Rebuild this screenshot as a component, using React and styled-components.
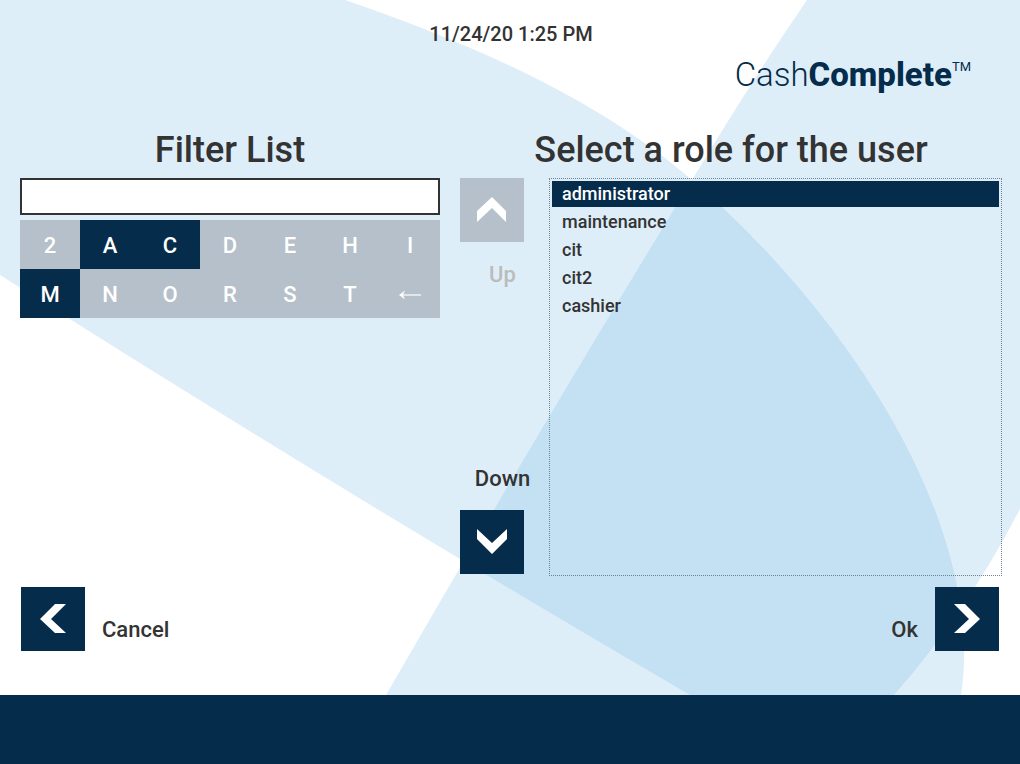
import React, { useState } from 'react';
import styled, { createGlobalStyle } from 'styled-components';

const NAVY = '#052c4b';
const GREY = '#b6c0ca';
const TEXT = '#333333';
const LIGHT = '#deeef9';
const MID = '#c4e1f3';

const ROLES = ['administrator', 'maintenance', 'cit', 'cit2', 'cashier'];
const KEYS = ['2', 'A', 'C', 'D', 'E', 'H', 'I', 'M', 'N', 'O', 'R', 'S', 'T'];

const CHEVRONS = {
  up: '32,19 46,33 46,44 32,30 17,44 17,33',
  down: '17,19 32,33 47,19 47,29 32,44 17,29',
  left: '19,32 34,17 45,17 30,32 45,46 34,46',
  right: '19,17 30,17 45,32 30,46 19,46 34,32',
};

const LENS = 'M0 0H345C455 38 590 92 692 180C820 290 955 470 964 640Q965 670 961 695H690Q340 491 0 275Z';
const BAND = 'M807 0Q752 80 692 180Q540 428 386 695H894Q965 615 1020 509V0Z';

const startsWith = (role, text) => role.toUpperCase().startsWith(text.toUpperCase());

const Chevron = ({ direction, disabled }) => (
  <Square $disabled={disabled} viewBox="0 0 64 64" aria-hidden="true">
    <polygon points={CHEVRONS[direction]} fill="#fff" />
  </Square>
);

const Background = () => (
  <Backdrop viewBox="0 0 1020 695" preserveAspectRatio="none" aria-hidden="true">
    <clipPath id="lens">
      <path d={LENS} />
    </clipPath>
    <path d={LENS} fill={LIGHT} />
    <path d={BAND} fill={LIGHT} />
    <path d={BAND} fill={MID} clipPath="url(#lens)" />
  </Backdrop>
);

const App = () => {
  const [filter, setFilter] = useState('');
  const [selected, setSelected] = useState(0);

  const roles = ROLES.filter(role => startsWith(role, filter));
  const isEnabled = key => roles.some(role => startsWith(role, filter + key));

  const changeFilter = value => {
    setFilter(value);
    setSelected(0);
  };

  return (
    <Page>
      <GlobalStyle />
      <Main>
        <Background />
        <Header>
          <Clock>11/24/20 1:25 PM</Clock>
          <Logo>
            Cash<strong>Complete</strong><sup>TM</sup>
          </Logo>
        </Header>
        <Content>
          <Section>
            <Title as="label" htmlFor="filter">Filter List</Title>
            <FilterInput
              id="filter"
              type="text"
              autoComplete="off"
              value={filter}
              onChange={e => changeFilter(e.target.value)}
            />
            <Keyboard>
              {KEYS.map(key => (
                <Key key={key} disabled={!isEnabled(key)} onClick={() => changeFilter(filter + key)}>
                  {key}
                </Key>
              ))}
              <Key aria-label="Backspace" disabled={!filter} onClick={() => changeFilter(filter.slice(0, -1))}>
                <svg width="22" height="12" viewBox="0 0 22 12" aria-hidden="true">
                  <path d="M1 6H22" stroke="#fff" strokeWidth="1.2" />
                  <path d="M0 6L6 1.5L4 6L6 10.5Z" fill="#fff" />
                </svg>
              </Key>
            </Keyboard>
          </Section>
          <Section>
            <Title id="roles-title">Select a role for the user</Title>
            <Picker>
              <Scroll>
                <ScrollButton disabled={selected === 0} onClick={() => setSelected(selected - 1)}>
                  <Chevron direction="up" disabled={selected === 0} />
                  <span>Up</span>
                </ScrollButton>
                <ScrollButton
                  disabled={selected >= roles.length - 1}
                  onClick={() => setSelected(selected + 1)}
                >
                  <span>Down</span>
                  <Chevron direction="down" disabled={selected >= roles.length - 1} />
                </ScrollButton>
              </Scroll>
              <List role="listbox" aria-labelledby="roles-title">
                {roles.map((role, index) => (
                  <Role
                    key={role}
                    role="option"
                    aria-selected={index === selected}
                    $selected={index === selected}
                    onClick={() => setSelected(index)}
                  >
                    {role}
                  </Role>
                ))}
              </List>
            </Picker>
          </Section>
        </Content>
        <Actions>
          <ActionButton>
            <Chevron direction="left" />
            <span>Cancel</span>
          </ActionButton>
          <ActionButton>
            <span>Ok</span>
            <Chevron direction="right" />
          </ActionButton>
        </Actions>
      </Main>
      <BottomBar />
    </Page>
  );
};

export default App;

const GlobalStyle = createGlobalStyle`
  * {
    box-sizing: border-box;
  }

  body {
    margin: 0;
    background: #fff;
    color: ${TEXT};
    font-family: Roboto, sans-serif;
    font-weight: 500;
  }

  button {
    padding: 0;
    border: 0;
    background: none;
    color: inherit;
    font: inherit;
    cursor: pointer;
  }
`;

const Page = styled.div`
  min-height: 100vh;
  display: flex;
  flex-direction: column;
`;

const Main = styled.main`
  position: relative;
  z-index: 0;
  flex: 1;
  display: flex;
  flex-direction: column;
  padding: 22px 18px 44px 20px;
`;

const Backdrop = styled.svg`
  position: absolute;
  inset: 0;
  z-index: -1;
  width: 100%;
  height: 100%;
`;

const Header = styled.header`
  display: flex;
  flex-direction: column;
`;

const Clock = styled.time`
  font-size: 20px;
  line-height: 24px;
  text-align: center;
`;

const Logo = styled.div`
  display: flex;
  justify-content: flex-end;
  margin-top: 7px;
  padding-right: 31px;
  color: ${NAVY};
  font-size: 33px;
  font-weight: 300;
  line-height: 44px;

  strong {
    font-weight: 800;
  }

  sup {
    font-size: 13px;
    font-weight: 400;
    line-height: 28px;
  }
`;

const Content = styled.div`
  flex: 1;
  display: grid;
  grid-template-columns: 420fr 542fr;
  gap: 20px;
  margin-top: 31px;
`;

const Section = styled.section`
  display: flex;
  flex-direction: column;
`;

const Title = styled.h1`
  margin: 0 0 6px;
  font-size: 36px;
  font-weight: 500;
  line-height: 44px;
  text-align: center;
`;

const FilterInput = styled.input`
  width: 100%;
  height: 37px;
  padding: 0 8px;
  border: 2px solid ${TEXT};
  border-radius: 0;
  background: #fff;
  color: ${TEXT};
  font: inherit;
  font-size: 22px;
  outline: none;
`;

const Keyboard = styled.div`
  display: grid;
  grid-template-columns: repeat(7, 1fr);
  margin-top: 5px;
`;

const Key = styled.button`
  display: flex;
  align-items: center;
  justify-content: center;
  height: 49px;
  && {
    padding-top: 2px;
    background: ${({ disabled }) => (disabled ? GREY : NAVY)};
    color: #fff;
    font-size: 22px;
  }
`;

const Picker = styled.div`
  flex: 1;
  display: flex;
  gap: 4px;
`;

const Scroll = styled.div`
  width: 85px;
  display: flex;
  flex-direction: column;
  justify-content: space-between;
  padding-bottom: 2px;
`;

const ScrollButton = styled.button`
  display: flex;
  flex-direction: column;
  gap: 18px;

  && {
    color: ${({ disabled }) => (disabled ? '#bbbbbb' : TEXT)};
    font-size: 22px;
    line-height: 26px;
  }

  span {
    width: 100%;
    padding-top: 2px;
    text-align: center;
  }
`;

const Square = styled.svg`
  flex-shrink: 0;
  width: 64px;
  height: 64px;
  background: ${({ $disabled }) => ($disabled ? GREY : NAVY)};
`;

const List = styled.div`
  flex: 1;
  display: flex;
  flex-direction: column;
  gap: 2px;
  padding: 2px;
  border: 1px dotted #6f8291;
`;

const Role = styled.button`
  height: 26px;
  && {
    padding: 0 10px;
    background: ${({ $selected }) => ($selected ? NAVY : 'transparent')};
    color: ${({ $selected }) => ($selected ? '#fff' : TEXT)};
    font-size: 18px;
    line-height: 26px;
    text-align: left;
  }
`;

const Actions = styled.div`
  display: flex;
  justify-content: space-between;
  margin-top: 11px;
  padding: 0 3px 0 1px;
`;

const ActionButton = styled.button`
  display: flex;
  align-items: flex-end;
  gap: 17px;

  && {
    font-size: 22px;
    line-height: 24px;
  }

  span {
    padding-bottom: 9px;
  }
`;

const BottomBar = styled.footer`
  height: 69px;
  background: ${NAVY};
`;
